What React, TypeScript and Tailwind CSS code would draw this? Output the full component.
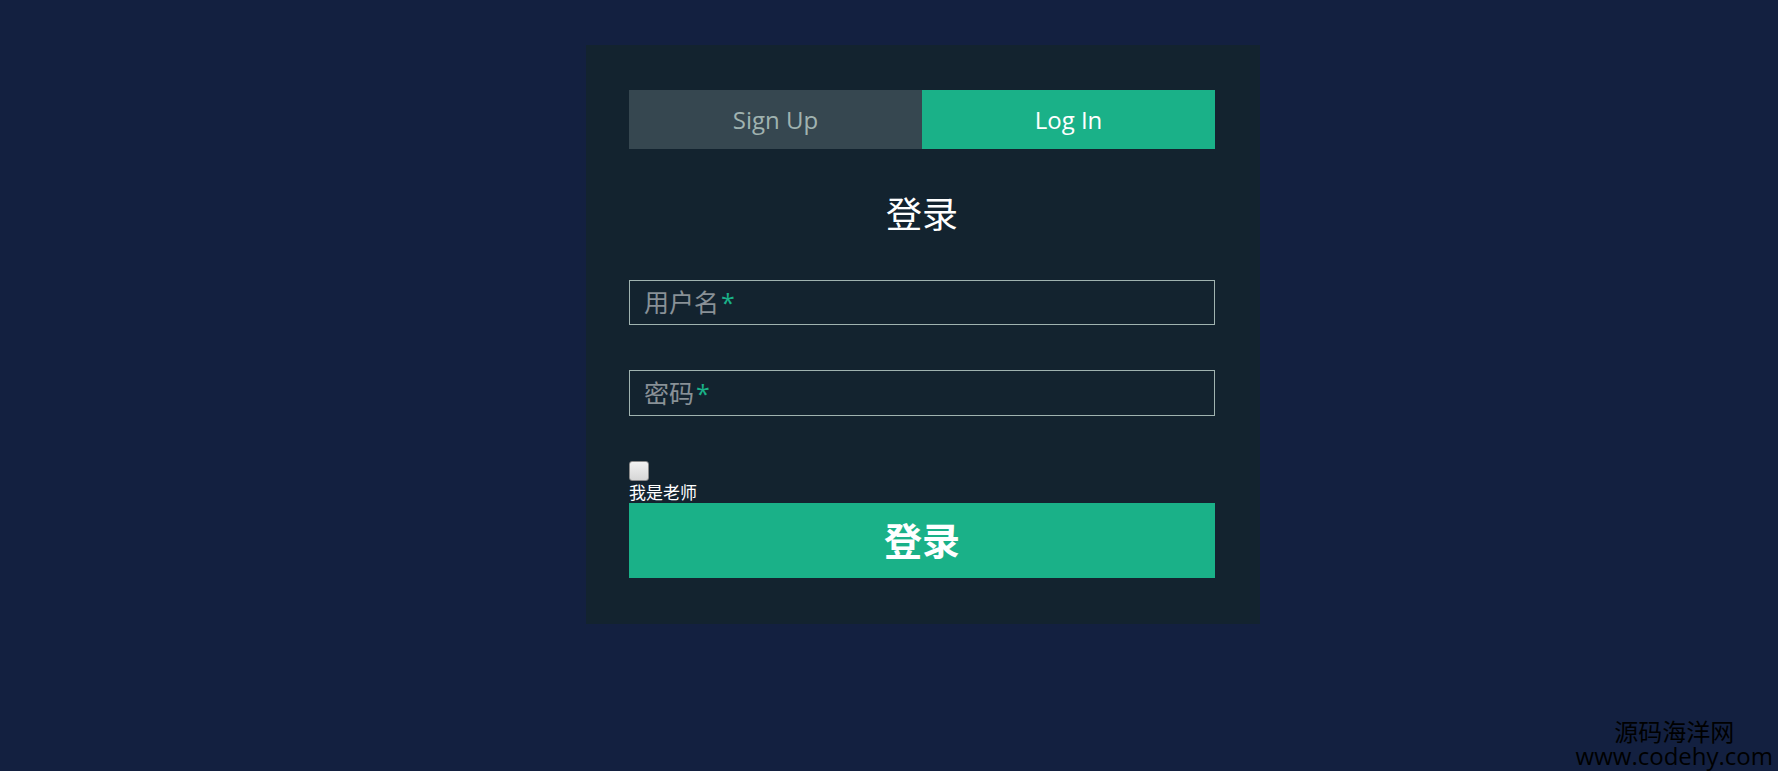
import React from 'react';

const cjk = { fontFamily: '"Open Sans", "Noto Sans CJK SC", sans-serif' };

export default function App() {
  return (
    <div className="relative min-h-[771px] w-full bg-[#132040] pt-[45px]" style={cjk}>
      {/* Login card */}
      <div className="ml-[586px] w-[674px] bg-[#13232f] pt-[45px] pb-[46px] pl-[43px] pr-[45px]">
        {/* Tabs */}
        <div className="flex h-[59px]">
          <button className="flex-1 bg-[#364750] text-[24px] text-[#a0b3b0]">Sign Up</button>
          <button className="flex-1 bg-[#1ab188] text-[24px] text-white">Log In</button>
        </div>

        <h1 className="mt-[48px] text-center text-[36px] leading-[36px] font-normal text-white">登录</h1>

        {/* Fields */}
        <div className="mt-[47px] flex h-[45px] items-center border border-[#a0b3b0] pl-[14px] text-[25px] leading-none text-white/50">
          用户名<span className="ml-[2px] text-[#1ab188]">*</span>
        </div>
        <div className="mt-[45px] flex h-[46px] items-center border border-[#a0b3b0] pl-[14px] text-[25px] leading-none text-white/50">
          密码<span className="ml-[2px] text-[#1ab188]">*</span>
        </div>

        <div className="mt-[45px]">
          <input
            type="checkbox"
            className="block h-[20px] w-[20px] appearance-none rounded-[3px] border border-[#8a8a8a] bg-gradient-to-b from-[#f2f2f2] to-[#d6d6d6]"
          />
          <label className="mt-[2px] block text-[17px] leading-[20px] text-white">我是老师</label>
        </div>

        <button className="block h-[75px] w-full bg-[#1ab188] text-[38px] font-bold text-white">登录</button>
      </div>

      {/* Watermark */}
      <div className="absolute right-[5px] bottom-[3px] text-center text-black">
        <div className="text-[24px] leading-[26px]" style={{ fontFamily: '"Noto Sans CJK SC", sans-serif' }}>源码海洋网</div>
        <div className="text-[24px] leading-[24px]" style={{ fontFamily: '"Open Sans", sans-serif' }}>www.codehy.com</div>
      </div>
    </div>
  );
}
